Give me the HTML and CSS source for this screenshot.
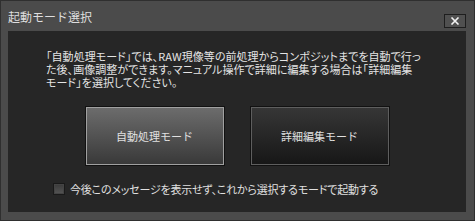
FILE: index.html
```html
<!DOCTYPE html>
<html lang="ja">
<head>
    <meta charset="UTF-8">
    <title>起動モード選択</title>
    <link rel="stylesheet" href="styles.css">
</head>
<body>
    <div class="window">
        <!-- Title bar -->
        <div class="titlebar">
            <span class="title">起動モード選択</span>
            <button class="close-button" aria-label="閉じる">
                <svg width="10" height="8" viewBox="0 0 10 8">
                    <path d="M1.5 0.5 L8.5 7.5 M8.5 0.5 L1.5 7.5" stroke="#f2f2f2" stroke-width="1.6" fill="none"/>
                </svg>
            </button>
        </div>

        <!-- Dialog body -->
        <div class="client">
            <p class="message">「自動処理モード」では、RAW現像等の前処理からコンポジットまでを自動で行っ<br>た後、画像調整ができます。マニュアル操作で詳細に編集する場合は「詳細編集<br>モード」を選択してください。</p>

            <div class="mode-buttons">
                <button class="mode-button selected">自動処理モード</button>
                <button class="mode-button">詳細編集モード</button>
            </div>

            <label class="dont-show">
                <span class="checkbox"></span>
                今後このメッセージを表示せず、これから選択するモードで起動する
            </label>
        </div>
    </div>
</body>
</html>
```

FILE: styles.css
```css
body {
    margin: 0;
    padding: 0;
    background-color: #4a4a4a;
    font-family: "Noto Sans CJK JP", "Noto Sans", sans-serif;
    color: #e2e2e2;
}

.window {
    width: 475px;
    height: 221px;
    box-sizing: border-box;
    border: 1px solid #2f2f2f;
    padding: 0 8px 8px 7px;
    background-color: #4b4b4b;
    display: flex;
    flex-direction: column;
}

/* Title bar */
.titlebar {
    height: 30px;
    display: flex;
    align-items: flex-start;
    justify-content: space-between;
}

.title {
    margin-top: 7px;
    font-size: 12px;
    line-height: 18px;
    color: #dedede;
}

.close-button {
    margin-top: 13px;
    width: 22px;
    height: 14px;
    padding: 0;
    border: 1px solid #1e1e1e;
    background-color: #505050;
    display: flex;
    align-items: center;
    justify-content: center;
}

/* Dialog body */
.client {
    flex: 1;
    background-color: #262626;
    padding: 19px 30px 0 38px;
}

.message {
    margin: 0;
    font-size: 11px;
    line-height: 13px;
    letter-spacing: 0.05px;
    white-space: nowrap;
    font-feature-settings: "palt";
    color: #e4e4e4;
}

.mode-buttons {
    display: flex;
    justify-content: center;
    gap: 27px;
    width: 380px;
    margin: 18px 0 0 1px;
}

.mode-button {
    width: 138px;
    height: 58px;
    padding: 0;
    font-family: inherit;
    font-size: 11px;
    color: #e0e0e0;
    border: 1px solid #5e5e5e;
    box-shadow: 0 0 0 1px #111;
    background: linear-gradient(#363636, #171717);
}

.mode-button.selected {
    border-color: #a0a0a0;
    background: linear-gradient(#6c6c6c, #393939);
}

.dont-show {
    display: flex;
    align-items: center;
    gap: 5px;
    margin: 16px 0 0 7px;
    font-size: 11px;
    letter-spacing: -0.2px;
    font-feature-settings: "palt";
    color: #e0e0e0;
}

.checkbox {
    width: 10px;
    height: 10px;
    border: 1px solid #1a1a1a;
    background: linear-gradient(#3a3a3a, #555);
    box-shadow: inset 0 0 0 1px #444;
}
```
